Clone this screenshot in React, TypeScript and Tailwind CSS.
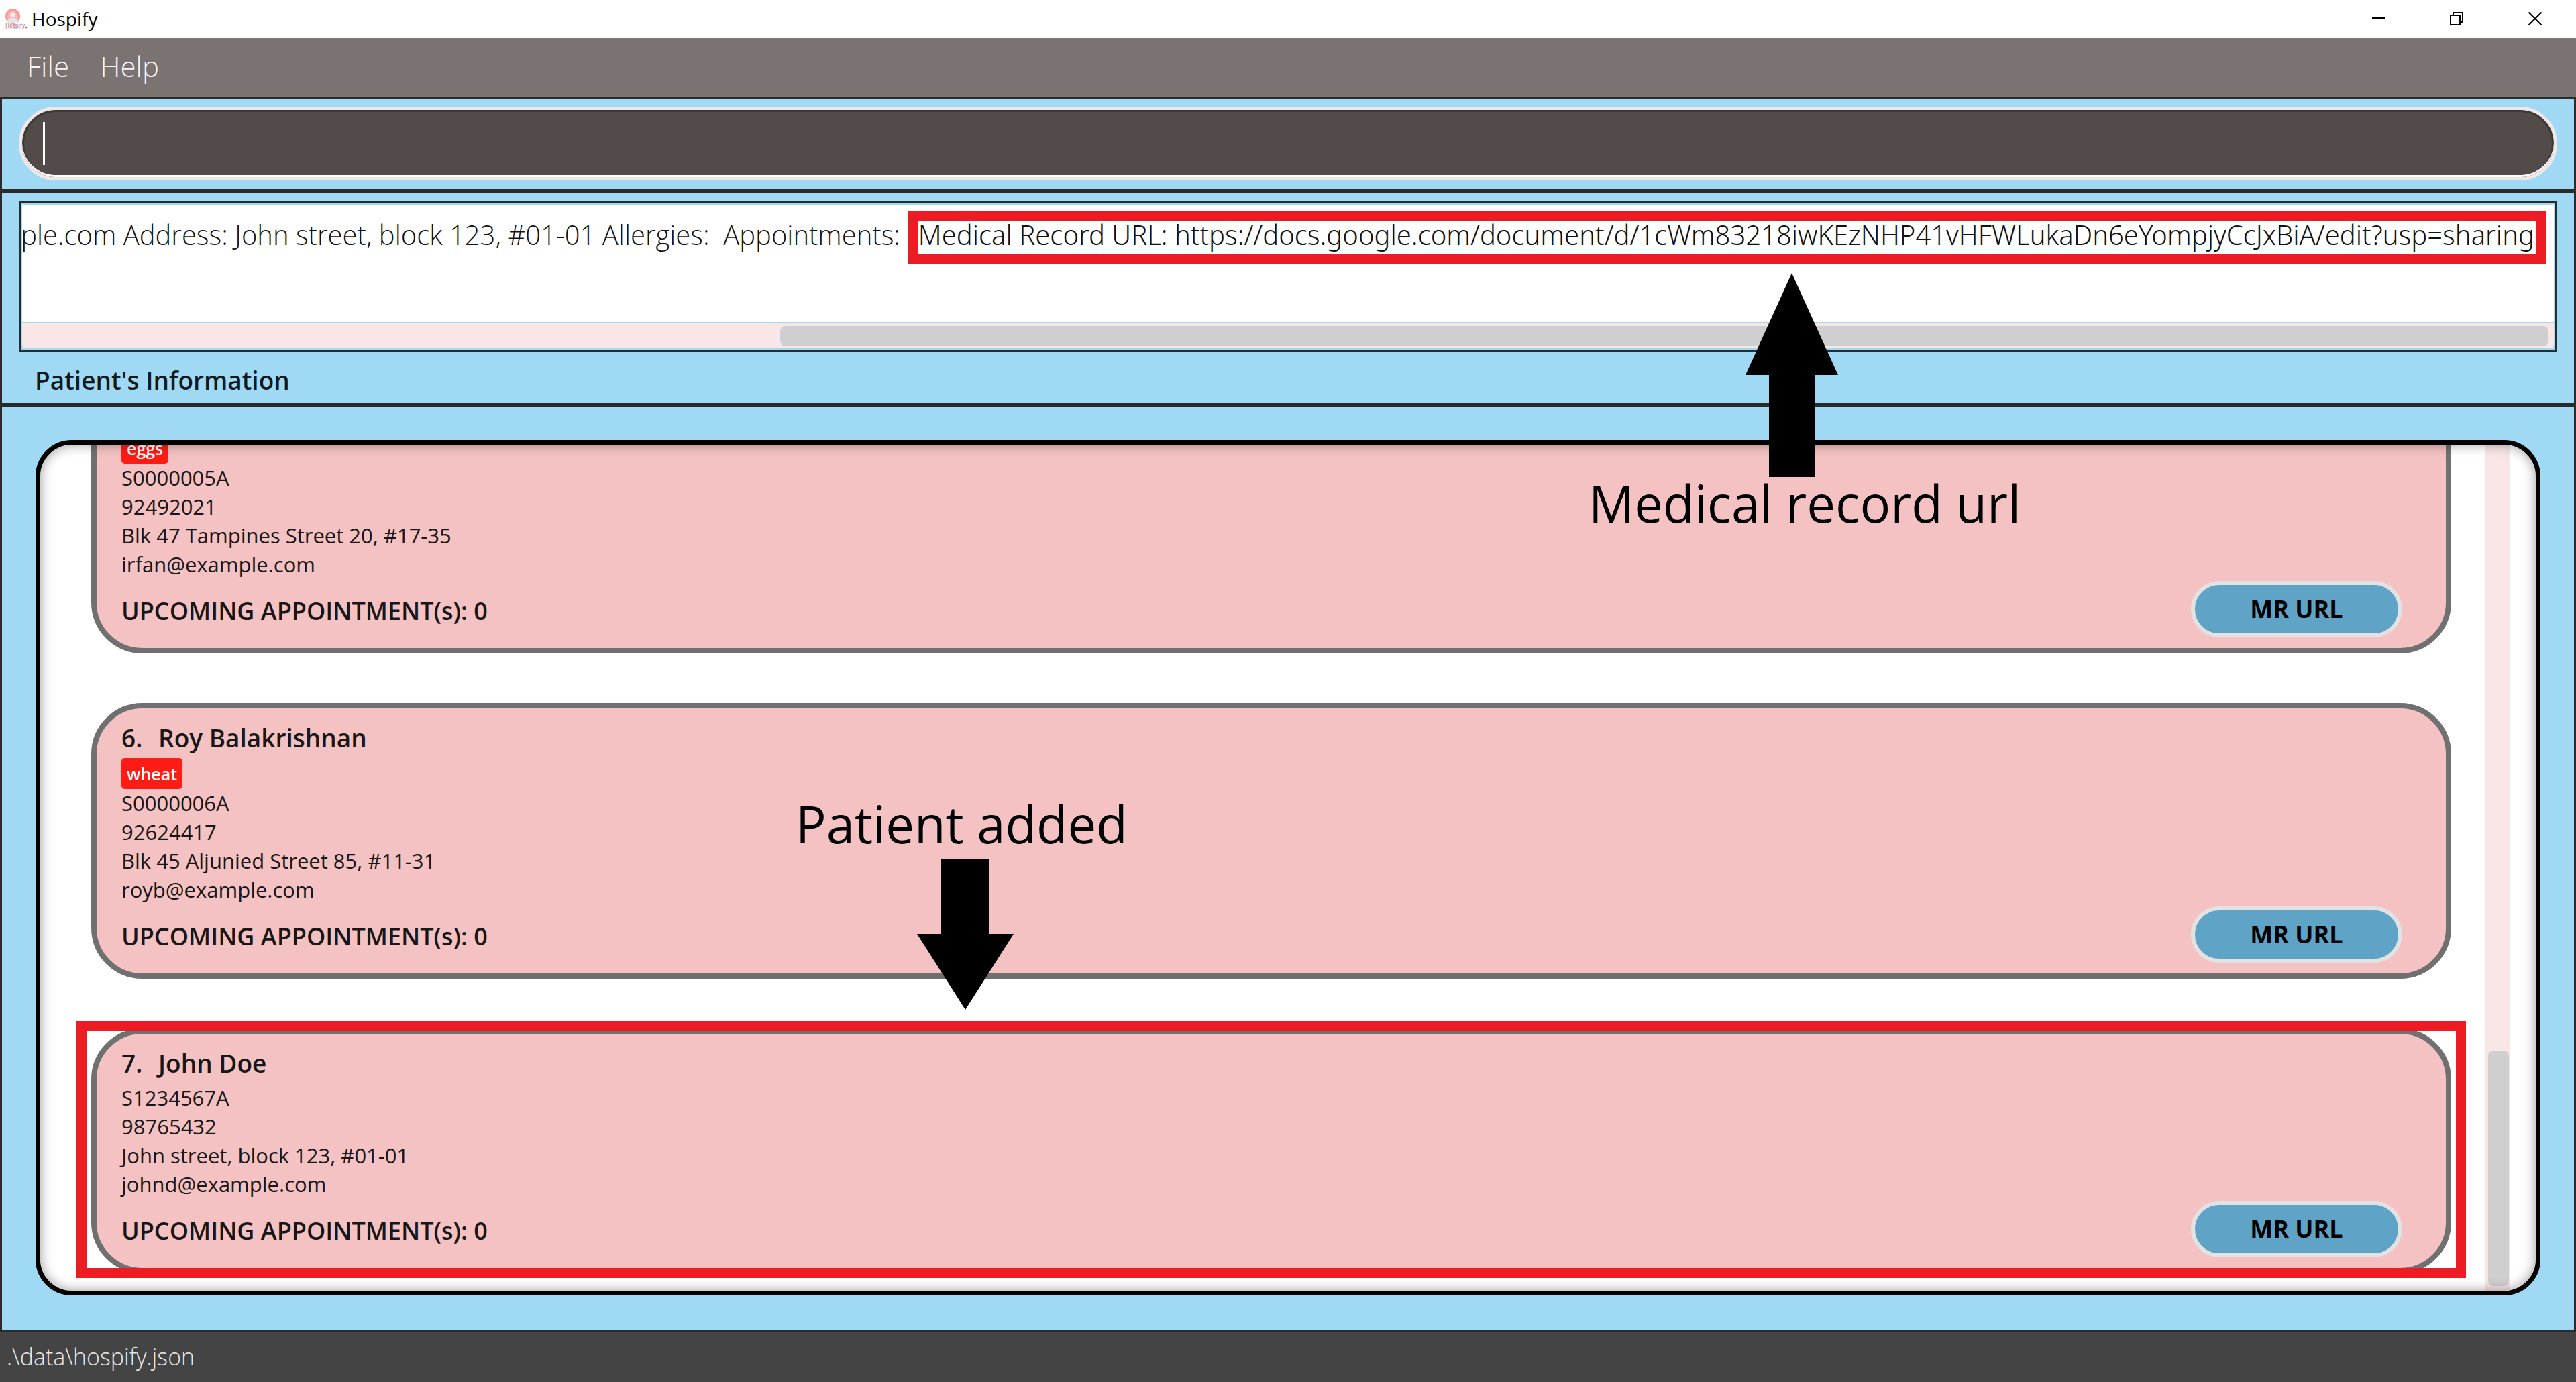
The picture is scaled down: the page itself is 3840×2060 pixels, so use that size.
type Patient = {
  index: number;
  name: string;
  allergies: string[];
  nric: string;
  phone: string;
  address: string;
  email: string;
  appointments: number;
  highlighted?: boolean;
};

const patients: Patient[] = [
  {
    index: 5,
    name: "Irfan Ibrahim",
    allergies: ["eggs"],
    nric: "S0000005A",
    phone: "92492021",
    address: "Blk 47 Tampines Street 20, #17-35",
    email: "irfan@example.com",
    appointments: 0,
  },
  {
    index: 6,
    name: "Roy Balakrishnan",
    allergies: ["wheat"],
    nric: "S0000006A",
    phone: "92624417",
    address: "Blk 45 Aljunied Street 85, #11-31",
    email: "royb@example.com",
    appointments: 0,
  },
  {
    index: 7,
    name: "John Doe",
    allergies: [],
    nric: "S1234567A",
    phone: "98765432",
    address: "John street, block 123, #01-01",
    email: "johnd@example.com",
    appointments: 0,
    highlighted: true,
  },
];

function AppLogo() {
  return (
    <svg className="h-8 w-[38px]" viewBox="0 0 38 32" aria-hidden="true">
      <ellipse cx="15" cy="12.5" rx="11" ry="11.5" fill="#f79a98" />
      <ellipse cx="15" cy="13.5" rx="8" ry="9" fill="#f8b9b7" />
      <circle cx="15" cy="10" r="3.6" fill="#eeeeee" />
      <path d="M6 23c0-5 3-7 6.500-8h5c3.500 1 6.500 3 6.500 8z" fill="#e6e6e6" />
      <text x="4" y="29" fontSize="8" fontFamily="Open Sans" fontWeight="600" fill="#b98a90">
        Hospify
      </text>
      <path d="M0 30h27" stroke="#d8c4c6" strokeWidth="1" />
      <circle cx="35" cy="29" r="1.500" fill="#c4708a" />
    </svg>
  );
}

function TitleBar() {
  return (
    <header className="flex h-14 shrink-0 items-center justify-between bg-white pl-1 text-black">
      <div className="flex items-center gap-[5px] text-[28px]">
        <AppLogo />
        <h1>Hospify</h1>
      </div>
      <div className="flex h-full pr-[2px]">
        <button type="button" aria-label="Minimize" className="flex w-[116px] items-center justify-center">
          <svg className="size-5" viewBox="0 0 20 20" stroke="black" strokeWidth="2">
            <path d="M0 9h20" />
          </svg>
        </button>
        <button type="button" aria-label="Restore" className="flex w-[116px] items-center justify-center">
          <svg className="size-5" viewBox="0 0 20 20" stroke="black" strokeWidth="2" fill="none">
            <path d="M1 5h14v14H1zM5 5V1h14v14h-4" />
          </svg>
        </button>
        <button type="button" aria-label="Close" className="flex w-[118px] items-center justify-center">
          <svg className="size-5" viewBox="0 0 20 20" stroke="black" strokeWidth="2">
            <path d="M0.500 0.500l19 19M19.500 0.500l-19 19" />
          </svg>
        </button>
      </div>
    </header>
  );
}

function MenuBar() {
  return (
    <nav className="flex h-[88px] shrink-0 items-center gap-[46px] bg-[#7a7372] pb-1 pl-10 text-[42px] font-light text-[#f7f5f5]">
      <button type="button">File</button>
      <button type="button">Help</button>
    </nav>
  );
}

function CommandBox() {
  return (
    <section className="shrink-0 border-[3px] border-[#2b2b2b] px-[25px] pt-3 pb-[13px]">
      <div className="relative">
        <input
          type="text"
          aria-label="Command"
          className="block h-[110px] w-full rounded-full border-[5px] border-[#f0e6e5] bg-[#534a4a] px-8 text-[40px] font-light text-white caret-transparent shadow-[inset_0_-3px_0_#ffffff,inset_0_0_0_3px_#3b3938] outline-none"
        />
        <span className="pointer-events-none absolute inset-y-[23px] left-9 w-[3px] bg-white" />
      </div>
    </section>
  );
}

function ResultBox() {
  return (
    <section className="shrink-0 border-[3px] border-[#2b2b2b] px-[25px] pt-3 pb-2">
      <div className="border-[3px] border-[#2b2b2b] px-[2px] pt-[2px] pb-[3px]">
        <div className="h-44 border-b border-[#9fd9f4] bg-white pt-5">
          <div className="flex justify-end pr-[29px] text-[40px] leading-[50px] font-light whitespace-pre text-[#111111]">
            <span>ple.com Address: John street, block 123, #01-01 Allergies:{"  "}Appointments:</span>
            <span className="relative ml-[27px] font-['Noto_Sans',sans-serif]">
              Medical Record URL:
              https://docs.google.com/document/d/1cWm83218iwKEzNHP41vHFWLukaDn6eYompjyCcJxBiA/edit?usp=sharing
              <span className="pointer-events-none absolute -top-[11px] -right-[18px] -bottom-[19px] -left-4 border-[15px] border-[#ed1c24]" />
            </span>
          </div>
        </div>
        <div className="flex h-[38px] justify-end rounded-b-md bg-[#f9e7e7] pt-[5px] pr-2 pb-[3px]">
          <div className="w-[70%] rounded-lg bg-[#cfcfcf]" />
        </div>
      </div>
      <h2 className="mt-[17px] pl-6 text-[37px] leading-[50px] font-semibold text-[#101a1c]">
        Patient's Information
      </h2>
    </section>
  );
}

function PatientCard({ patient }: { patient: Patient }) {
  return (
    <li className="relative shrink-0">
      <article className="flex items-end justify-between rounded-[76px] border-8 border-[#707070] bg-[#f4c2c2] pt-[19px] pr-[65px] pb-4 pl-[37px] text-[#181616]">
        <div className="flex flex-col items-start pb-[14px]">
          <h3 className="mb-[5px] flex text-[37px] leading-[50px] font-semibold">
            <span className="w-[55px]">{patient.index}.</span>
            <span>{patient.name}</span>
          </h3>
          {patient.allergies.map((allergy) => (
            <span
              key={allergy}
              className="h-[46px] rounded-[5px] bg-[#ff1c15] px-2 text-[25px] leading-[46px] font-semibold text-white"
            >
              {allergy}
            </span>
          ))}
          <div className="text-[31px] leading-[43px]">
            <p>{patient.nric}</p>
            <p>{patient.phone}</p>
            <p>{patient.address}</p>
            <p>{patient.email}</p>
          </div>
          <p className="mt-[23px] text-[36px] leading-[50px] font-semibold">
            UPCOMING APPOINTMENT(s): {patient.appointments}
          </p>
        </div>
        <button
          type="button"
          className="h-[84px] w-[315px] rounded-full border-[6px] border-[#e2e2e2] bg-[#5fa4c6] text-[36px] font-bold text-black"
        >
          MR URL
        </button>
      </article>
      {patient.highlighted && (
        <span className="pointer-events-none absolute -inset-x-[22px] -top-[11px] -bottom-[7px] border-[15px] border-[#ed1c24]" />
      )}
    </li>
  );
}

function PatientList() {
  return (
    <section className="flex min-h-0 flex-1 flex-col border-[3px] border-[#2b2b2b] px-[50px] pt-[50px] pb-[51px]">
      <div className="relative flex min-h-0 flex-1 overflow-hidden rounded-[54px] border-[7px] border-black bg-white pr-[39px] pl-[76px]">
        <ul className="flex min-w-0 flex-1 flex-col justify-end gap-[74px] pb-[26px]">
          {patients.map((patient) => (
            <PatientCard key={patient.index} patient={patient} />
          ))}
        </ul>
        <div className="ml-[50px] flex w-[37px] flex-col justify-end bg-[#f9e7e7] pr-px pb-[7px] pl-[5px]">
          <div className="h-[28%] rounded-lg bg-[#cfcfcf]" />
        </div>
        <div className="pointer-events-none absolute inset-0 rounded-[47px] shadow-[inset_0_0_18px_rgba(0,0,0,0.4)]" />
      </div>
    </section>
  );
}

function Annotations() {
  return (
    <div className="pointer-events-none text-[76px] leading-[100px] whitespace-nowrap text-black">
      <svg className="absolute top-[407px] left-[2602px] h-[304px] w-[138px]" viewBox="0 0 138 304">
        <path d="M69 0l69 152h-34v152H35V152H0z" />
      </svg>
      <p className="absolute top-[700px] left-[2368px]">Medical record url</p>
      <p className="absolute top-[1178px] left-[1186px]">Patient added</p>
      <svg className="absolute top-[1280px] left-[1367px] h-[225px] w-[144px]" viewBox="0 0 144 225">
        <path d="M36 0h72v112h36L72 225 0 112h36z" />
      </svg>
    </div>
  );
}

export default function App() {
  return (
    <div className="relative flex h-screen flex-col overflow-hidden bg-[#9fd9f4] font-['Open_Sans',sans-serif]">
      <TitleBar />
      <MenuBar />
      <CommandBox />
      <ResultBox />
      <PatientList />
      <footer className="flex h-[75px] shrink-0 items-center bg-[#444444] pl-[10px] text-[34px] font-light text-[#e8e8e8]">
        .\data\hospify.json
      </footer>
      <Annotations />
    </div>
  );
}
